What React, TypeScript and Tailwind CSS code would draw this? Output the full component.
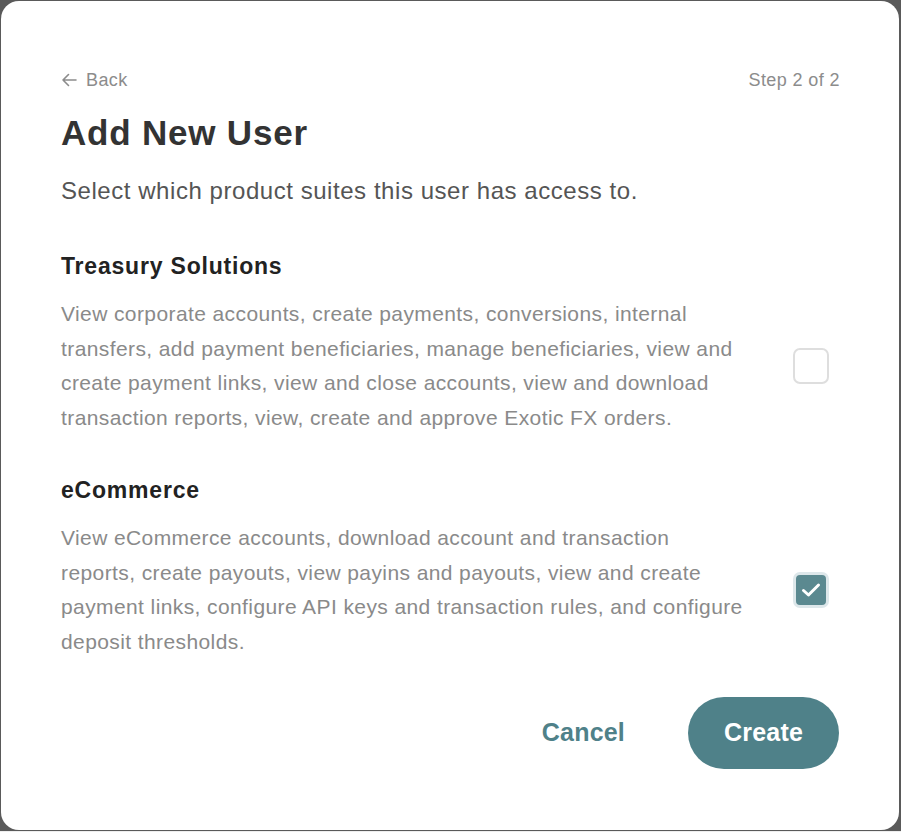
import React from "react";

const font = { fontFamily: '"Liberation Sans", Arial, sans-serif' };

function Section({ title, desc, checked }: { title: string; desc: string; checked: boolean }) {
  return (
    <div className="flex flex-col">
      <h2 className="text-[23px] font-bold leading-[28px] tracking-[0.8px] text-[#222222]">{title}</h2>
      <div className="mt-[17px] flex items-center">
        <p className="w-[686px] text-[21px] leading-[34.5px] tracking-[0.4px] text-[#8a8a8a]">{desc}</p>
        <div className="ml-auto mr-[10px] flex items-center">
          {checked ? (
            <div className="flex h-[36px] w-[36px] items-center justify-center rounded-[7px] border-[3px] border-[#dde7ea] bg-[#5b8990]">
              <svg width="20" height="16" viewBox="0 0 20 16" fill="none">
                <path d="M2.5 8.5 L7.5 13 L17.5 3" stroke="white" strokeWidth="3" strokeLinecap="round" strokeLinejoin="round" />
              </svg>
            </div>
          ) : (
            <div className="h-[36px] w-[36px] rounded-[7px] border-2 border-[#dedede] bg-white" />
          )}
        </div>
      </div>
    </div>
  );
}

export default function App() {
  return (
    <div className="flex h-[832px] w-[901px] flex-col bg-[#5a5a5a]" style={font}>
      <div className="pl-[1px] pr-[2px] pt-[1px]">
        <div className="flex h-[829px] flex-col rounded-[18px] bg-white px-[60px] pt-[68px]">
          <div className="flex items-center justify-between text-[18px] leading-[22px] tracking-[0.4px] text-[#8c8c8c]">
            <div className="flex items-center gap-[9px]">
              <svg width="16" height="14" viewBox="0 0 16 14" fill="none">
                <path d="M15 7 H2 M7.5 1.5 L2 7 L7.5 12.5" stroke="#8c8c8c" strokeWidth="1.6" strokeLinecap="round" strokeLinejoin="round" />
              </svg>
              <span>Back</span>
            </div>
            <span className="mr-[-1px]">Step 2 of 2</span>
          </div>
          <h1 className="mt-[22px] text-[35px] font-bold leading-[40px] tracking-[0.8px] text-[#333333]">Add New User</h1>
          <p className="mt-[24px] text-[24px] leading-[28px] tracking-[0.55px] text-[#555555]">
            Select which product suites this user has access to.
          </p>
          <div className="mt-[47px]">
            <Section
              title="Treasury Solutions"
              checked={false}
              desc="View corporate accounts, create payments, conversions, internal transfers, add payment beneficiaries, manage beneficiaries, view and create payment links, view and close accounts, view and download transaction reports, view, create and approve Exotic FX orders."
            />
          </div>
          <div className="mt-[41px]">
            <Section
              title="eCommerce"
              checked={true}
              desc="View eCommerce accounts, download account and transaction reports, create payouts, view payins and payouts, view and create payment links, configure API keys and transaction rules, and configure deposit thresholds."
            />
          </div>
          <div className="mt-[38px] flex items-center justify-end">
            <button className="mr-[63px] text-[25px] font-bold tracking-[0.2px] text-[#4f8189]">Cancel</button>
            <button className="flex h-[72px] w-[151px] items-center justify-center rounded-full bg-[#4f8189] text-[25px] font-bold tracking-[0.2px] text-white">
              Create
            </button>
          </div>
        </div>
      </div>
      <div className="mt-[1px] h-[1px] bg-[#eeeeee]" />
    </div>
  );
}
